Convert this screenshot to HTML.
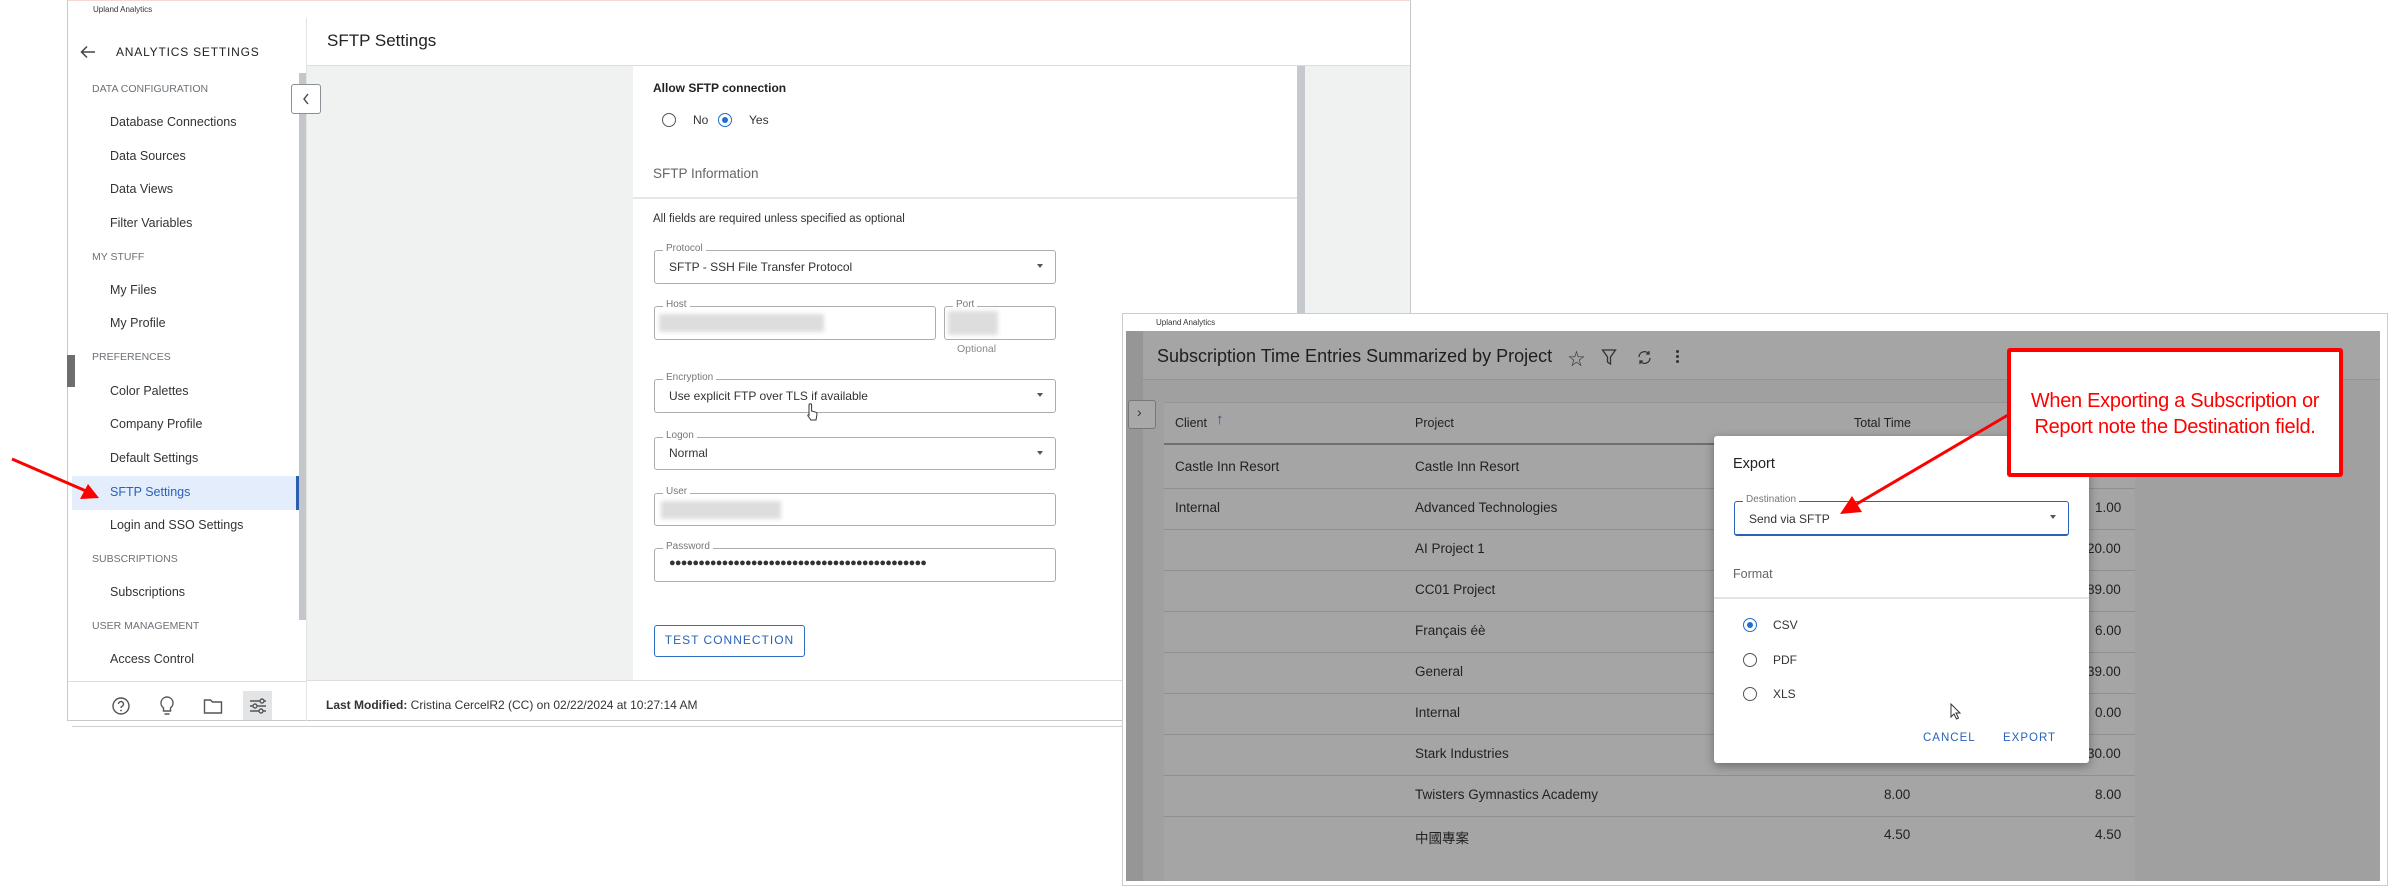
<!DOCTYPE html>
<html><head><meta charset="utf-8">
<style>
*{box-sizing:border-box;margin:0;padding:0}
body{width:2399px;height:890px;background:#fff;position:relative;overflow:hidden;font-family:"Liberation Sans","Noto Sans CJK SC",sans-serif;color:#333}
.a{position:absolute;white-space:nowrap}
.sec{font-size:10.5px;color:#6b7177;left:92px}
.it{font-size:12.5px;color:#333;left:110px}
.fld{position:absolute;left:654px;width:402px;border:1.5px solid #a9adb1;border-radius:3px;background:#fff}
.lab{position:absolute;top:-8px;left:8px;background:#fff;padding:0 3px;font-size:10px;color:#777}
.val{position:absolute;left:14px;font-size:12px;color:#333}
.dd{position:absolute;right:12px;top:13px;width:0;height:0;border-left:3.5px solid transparent;border-right:3.5px solid transparent;border-top:4px solid #555}
.blur{position:absolute;background:#ddd;filter:blur(2px)}
.row{position:absolute;left:1164px;width:971px;height:1px;background:#8f8f8f}
.tc{position:absolute;font-size:13.5px;color:#222}
.rad{position:absolute;width:14px;height:14px;border:1.5px solid #555;border-radius:50%;background:#fff}
.rad.on{border-color:#1f6fd0}
.rad.on::after{content:"";position:absolute;left:2.5px;top:2.5px;width:6px;height:6px;border-radius:50%;background:#1f6fd0}
</style></head><body>

<!-- LEFT WINDOW -->
<div class="a" style="left:67px;top:0;width:1344px;height:721px;border:1px solid #c8c8c8;border-top:1px solid #f3d9cf;background:#fff"></div>
<div class="a" style="left:72px;top:721px;width:1340px;height:6px;border-bottom:1px solid #cfcfcf"></div>
<div class="a" style="left:93px;top:5px;font-size:8px;color:#333">Upland Analytics</div>

<!-- sidebar -->
<div class="a" style="left:306px;top:18px;width:1px;height:703px;background:#e3e3e3"></div>
<div class="a" style="left:299px;top:73px;width:7px;height:547px;background:#c3c7cb"></div>
<svg class="a" style="left:80px;top:45px" width="16" height="14" viewBox="0 0 16 14"><path d="M15 7H2M7 1.5L1.5 7 7 12.5" fill="none" stroke="#444" stroke-width="1.5"/></svg>
<div class="a" style="left:116px;top:45px;font-size:12px;letter-spacing:0.8px;color:#222">ANALYTICS SETTINGS</div>
<div class="a sec" style="top:83px">DATA CONFIGURATION</div>
<div class="a it" style="top:115px">Database Connections</div>
<div class="a it" style="top:149px">Data Sources</div>
<div class="a it" style="top:182px">Data Views</div>
<div class="a it" style="top:216px">Filter Variables</div>
<div class="a sec" style="top:251px">MY STUFF</div>
<div class="a it" style="top:283px">My Files</div>
<div class="a it" style="top:316px">My Profile</div>
<div class="a sec" style="top:351px">PREFERENCES</div>
<div class="a it" style="top:384px">Color Palettes</div>
<div class="a it" style="top:417px">Company Profile</div>
<div class="a it" style="top:451px">Default Settings</div>
<div class="a" style="left:72px;top:476px;width:227px;height:34px;background:#e3edfb"></div>
<div class="a" style="left:296px;top:476px;width:3px;height:34px;background:#2b5fb0"></div>
<div class="a it" style="top:485px;color:#2a62b8">SFTP Settings</div>
<div class="a it" style="top:518px">Login and SSO Settings</div>
<div class="a sec" style="top:553px">SUBSCRIPTIONS</div>
<div class="a it" style="top:585px">Subscriptions</div>
<div class="a sec" style="top:620px">USER MANAGEMENT</div>
<div class="a it" style="top:652px">Access Control</div>
<div class="a" style="left:68px;top:681px;width:238px;height:1px;background:#ddd"></div>
<div class="a" style="left:67px;top:355px;width:8px;height:32px;background:#6e6e6e"></div>
<!-- bottom icons -->
<svg class="a" style="left:111px;top:696px" width="20" height="20" viewBox="0 0 20 20"><circle cx="10" cy="10" r="8" fill="none" stroke="#555" stroke-width="1.4"/><path d="M7.5 8a2.5 2.5 0 1 1 3.5 2.3c-.8.4-1 .9-1 1.7" fill="none" stroke="#555" stroke-width="1.4"/><circle cx="10" cy="14.5" r=".9" fill="#555"/></svg>
<svg class="a" style="left:158px;top:695px" width="18" height="22" viewBox="0 0 18 22"><path d="M9 2a6 6 0 0 0-3.5 10.9V16h7v-3.1A6 6 0 0 0 9 2zM6.5 19h5" fill="none" stroke="#555" stroke-width="1.4"/></svg>
<svg class="a" style="left:203px;top:698px" width="20" height="17" viewBox="0 0 20 17"><path d="M1.5 2h6l2 2h9v11h-17z" fill="none" stroke="#555" stroke-width="1.4"/></svg>
<div class="a" style="left:243px;top:691px;width:29px;height:29px;background:#e2e4e6"></div>
<svg class="a" style="left:248px;top:696px" width="20" height="20" viewBox="0 0 20 20" fill="none" stroke="#555" stroke-width="1.4"><path d="M2 5h16M2 10h16M2 15h16"/><circle cx="14" cy="5" r="2" fill="#e2e4e6"/><circle cx="7" cy="10" r="2" fill="#e2e4e6"/><circle cx="13" cy="15" r="2" fill="#e2e4e6"/></svg>

<!-- main -->
<div class="a" style="left:327px;top:31px;font-size:17px;color:#222">SFTP Settings</div>
<div class="a" style="left:307px;top:65px;width:1103px;height:1px;background:#ddd"></div>
<div class="a" style="left:307px;top:66px;width:1103px;height:615px;background:#f0f1f1"></div>
<div class="a" style="left:633px;top:66px;width:664px;height:615px;background:#fff"></div>
<div class="a" style="left:1297px;top:66px;width:8px;height:615px;background:#c5c9cd"></div>
<div class="a" style="left:291px;top:84px;width:30px;height:30px;border:1px solid #8a9096;border-radius:3px;background:#fff"></div>
<svg class="a" style="left:301px;top:92px" width="10" height="14" viewBox="0 0 10 14"><path d="M7 2L3 7l4 5" fill="none" stroke="#444" stroke-width="1.4"/></svg>

<div class="a" style="left:653px;top:81px;font-size:12px;font-weight:bold;color:#222">Allow SFTP connection</div>
<div class="rad" style="left:662px;top:113px"></div>
<div class="a" style="left:693px;top:113px;font-size:12px">No</div>
<div class="rad on" style="left:718px;top:113px"></div>
<div class="a" style="left:749px;top:113px;font-size:12px">Yes</div>
<div class="a" style="left:653px;top:166px;font-size:13.5px;color:#666">SFTP Information</div>
<div class="a" style="left:633px;top:197px;width:664px;height:2px;background:#e6e6e6"></div>
<div class="a" style="left:653px;top:213px;font-size:11.5px;color:#333">All fields are required unless specified as optional</div>

<div class="fld" style="top:250px;height:34px"><span class="lab">Protocol</span><span class="val" style="top:9px">SFTP - SSH File Transfer Protocol</span><span class="dd"></span></div>
<div class="fld" style="top:306px;height:34px;width:282px"><span class="lab">Host</span><div class="blur" style="left:4px;top:7px;width:165px;height:18px"></div></div>
<div class="fld" style="top:306px;height:34px;left:944px;width:112px"><span class="lab">Port</span><div class="blur" style="left:3px;top:4px;width:50px;height:24px"></div></div>
<div class="a" style="left:957px;top:343px;font-size:10.5px;color:#888">Optional</div>
<div class="fld" style="top:379px;height:34px"><span class="lab">Encryption</span><span class="val" style="top:9px">Use explicit FTP over TLS if available</span><span class="dd"></span></div>
<svg class="a" style="left:805px;top:402px" width="14" height="20" viewBox="0 0 14 20"><path d="M4 13V3a1.3 1.3 0 0 1 2.6 0v6l4 1.2c1.3.4 1.6 1.3 1.3 2.6L11 18H6l-3-4c-.6-.9.4-1.8 1-1z" fill="#fff" stroke="#333" stroke-width="1"/></svg>
<div class="fld" style="top:437px;height:33px"><span class="lab">Logon</span><span class="val" style="top:8px">Normal</span><span class="dd"></span></div>
<div class="fld" style="top:493px;height:33px"><span class="lab">User</span><div class="blur" style="left:6px;top:7px;width:120px;height:18px"></div></div>
<div class="fld" style="top:548px;height:34px"><span class="lab">Password</span><span class="val" style="top:8px;font-size:11px;letter-spacing:-0.8px">●●●●●●●●●●●●●●●●●●●●●●●●●●●●●●●●●●●●●●●●●●●●</span></div>
<div class="a" style="left:654px;top:625px;width:151px;height:32px;border:1.5px solid #2f6fc0;border-radius:3px;font-size:12px;letter-spacing:1px;color:#2a62b8;text-align:center;line-height:29px">TEST CONNECTION</div>

<div class="a" style="left:307px;top:680px;width:1103px;height:1px;background:#ddd"></div>
<div class="a" style="left:326px;top:698px;font-size:12px;color:#333"><b>Last Modified:</b> Cristina CercelR2 (CC) on 02/22/2024 at 10:27:14 AM</div>

<!-- RIGHT WINDOW -->
<div class="a" style="left:1122px;top:313px;width:1266px;height:573px;background:#fff;border:1px solid #ccc"></div>
<div class="a" style="left:1156px;top:318px;font-size:8px;color:#333">Upland Analytics</div>
<div class="a" style="left:1126px;top:331px;width:1254px;height:550px;background:#a0a0a0"></div>
<div class="a" style="left:1126px;top:331px;width:17px;height:550px;background:#969696"></div>
<div class="a" style="left:1143px;top:331px;width:1237px;height:49px;background:#a5a5a5;border-bottom:1px solid #939393"></div>
<div class="a" style="left:1157px;top:346px;font-size:18px;color:#1e1e1e">Subscription Time Entries Summarized by Project</div>
<div class="a" style="left:1568px;top:345px;font-size:17px;color:#333">☆</div>
<svg class="a" style="left:1601px;top:348px" width="16" height="18" viewBox="0 0 16 18"><path d="M1.5 2h13l-5 7v7l-3-2V9z" fill="none" stroke="#333" stroke-width="1.3"/></svg>
<svg class="a" style="left:1636px;top:349px" width="17" height="17" viewBox="0 0 17 17" fill="none" stroke="#333" stroke-width="1.3"><path d="M3 8a5.5 5.5 0 0 1 10-3M14 9a5.5 5.5 0 0 1-10 3M13 2v3h-3M4 15v-3h3"/></svg>
<div class="a" style="left:1676px;top:350px;width:3px;height:3px;background:#333;border-radius:50%;box-shadow:0 5px 0 #333,0 10px 0 #333"></div>

<div class="a" style="left:1164px;top:402px;width:971px;height:479px;background:#a5a5a5;border-top:1px solid #959595"></div>
<div class="a" style="left:1128px;top:400px;width:28px;height:29px;border:1px solid #777;border-radius:3px;background:#a8a8a8"></div>
<div class="a" style="left:1137px;top:404px;font-size:14px;color:#333">›</div>
<div class="tc" style="left:1175px;top:416px;font-size:12.5px">Client</div>
<div class="a" style="left:1216px;top:411px;font-size:15px;color:#1b56a8;font-weight:bold">↑</div>
<div class="tc" style="left:1415px;top:416px;font-size:12.5px">Project</div>
<div class="tc" style="left:1854px;top:416px;font-size:12.5px">Total Time</div>
<div class="row" style="top:443px;height:2px;background:#6f6f6f"></div>
<div class="row" style="top:488px"></div><div class="row" style="top:529px"></div><div class="row" style="top:570px"></div><div class="row" style="top:611px"></div><div class="row" style="top:652px"></div><div class="row" style="top:693px"></div><div class="row" style="top:734px"></div><div class="row" style="top:775px"></div><div class="row" style="top:816px"></div>
<div class="tc" style="left:1175px;top:459px">Castle Inn Resort</div><div class="tc" style="left:1415px;top:459px">Castle Inn Resort</div>
<div class="tc" style="left:1175px;top:500px">Internal</div><div class="tc" style="left:1415px;top:500px">Advanced Technologies</div><div class="tc" style="left:2095px;top:500px">1.00</div>
<div class="tc" style="left:1415px;top:541px">AI Project 1</div><div class="tc" style="left:2087px;top:541px">20.00</div>
<div class="tc" style="left:1415px;top:582px">CC01 Project</div><div class="tc" style="left:2087px;top:582px">89.00</div>
<div class="tc" style="left:1415px;top:623px">Français éè</div><div class="tc" style="left:2095px;top:623px">6.00</div>
<div class="tc" style="left:1415px;top:664px">General</div><div class="tc" style="left:2087px;top:664px">39.00</div>
<div class="tc" style="left:1415px;top:705px">Internal</div><div class="tc" style="left:2095px;top:705px">0.00</div>
<div class="tc" style="left:1415px;top:746px">Stark Industries</div><div class="tc" style="left:2087px;top:746px">30.00</div>
<div class="tc" style="left:1415px;top:787px">Twisters Gymnastics Academy</div><div class="tc" style="left:1884px;top:787px">8.00</div><div class="tc" style="left:2095px;top:787px">8.00</div>
<div class="tc" style="left:1415px;top:827px">中國專案</div><div class="tc" style="left:1884px;top:827px">4.50</div><div class="tc" style="left:2095px;top:827px">4.50</div>

<!-- export dialog -->
<div class="a" style="left:1714px;top:436px;width:375px;height:327px;background:#fff;border-radius:3px;box-shadow:0 3px 10px rgba(0,0,0,.35)"></div>
<div class="a" style="left:1733px;top:456px;font-size:14.5px;color:#222">Export</div>
<div class="a" style="left:1734px;top:501px;width:335px;height:35px;border:1.5px solid #2a62b8;border-bottom:2px solid #2a62b8;border-radius:3px">
<span class="lab" style="top:-8px">Destination</span><span class="val" style="top:10px">Send via SFTP</span><span class="dd"></span></div>
<div class="a" style="left:1733px;top:567px;font-size:12.5px;color:#666">Format</div>
<div class="a" style="left:1714px;top:597px;width:375px;height:2px;background:#e4e4e4"></div>
<div class="rad on" style="left:1743px;top:618px"></div><div class="a" style="left:1773px;top:618px;font-size:12px">CSV</div>
<div class="rad" style="left:1743px;top:653px"></div><div class="a" style="left:1773px;top:653px;font-size:12px">PDF</div>
<div class="rad" style="left:1743px;top:687px"></div><div class="a" style="left:1773px;top:687px;font-size:12px">XLS</div>
<div class="a" style="left:1923px;top:732px;font-size:11.5px;letter-spacing:1px;color:#2a62b8">CANCEL</div>
<div class="a" style="left:2003px;top:732px;font-size:11.5px;letter-spacing:1px;color:#2a62b8">EXPORT</div>
<svg class="a" style="left:1950px;top:703px" width="12" height="18" viewBox="0 0 12 18"><path d="M1 1v13l3-3 2.5 5 2-1-2.5-5h4z" fill="#fff" stroke="#333" stroke-width="1"/></svg>

<!-- callout -->
<div class="a" style="left:2007px;top:348px;width:336px;height:129px;background:#fff;border:4px solid #f00;border-radius:3px"></div>
<div class="a" style="left:2011px;top:388px;width:328px;text-align:center;font-size:20px;line-height:26px;color:#f00;white-space:normal;letter-spacing:-0.3px">When Exporting a Subscription or Report note the Destination field.</div>

<svg class="a" style="left:0;top:0" width="2399" height="890">
<line x1="2008" y1="415" x2="1855" y2="505" stroke="#f00" stroke-width="3"/>
<path d="M1840 514 L1852 496 L1862 512 Z" fill="#f00"/>
<line x1="12" y1="459" x2="86" y2="491" stroke="#f00" stroke-width="3"/>
<path d="M99 498 L80 499 L88 484 Z" fill="#f00"/>
</svg>
</body></html>
